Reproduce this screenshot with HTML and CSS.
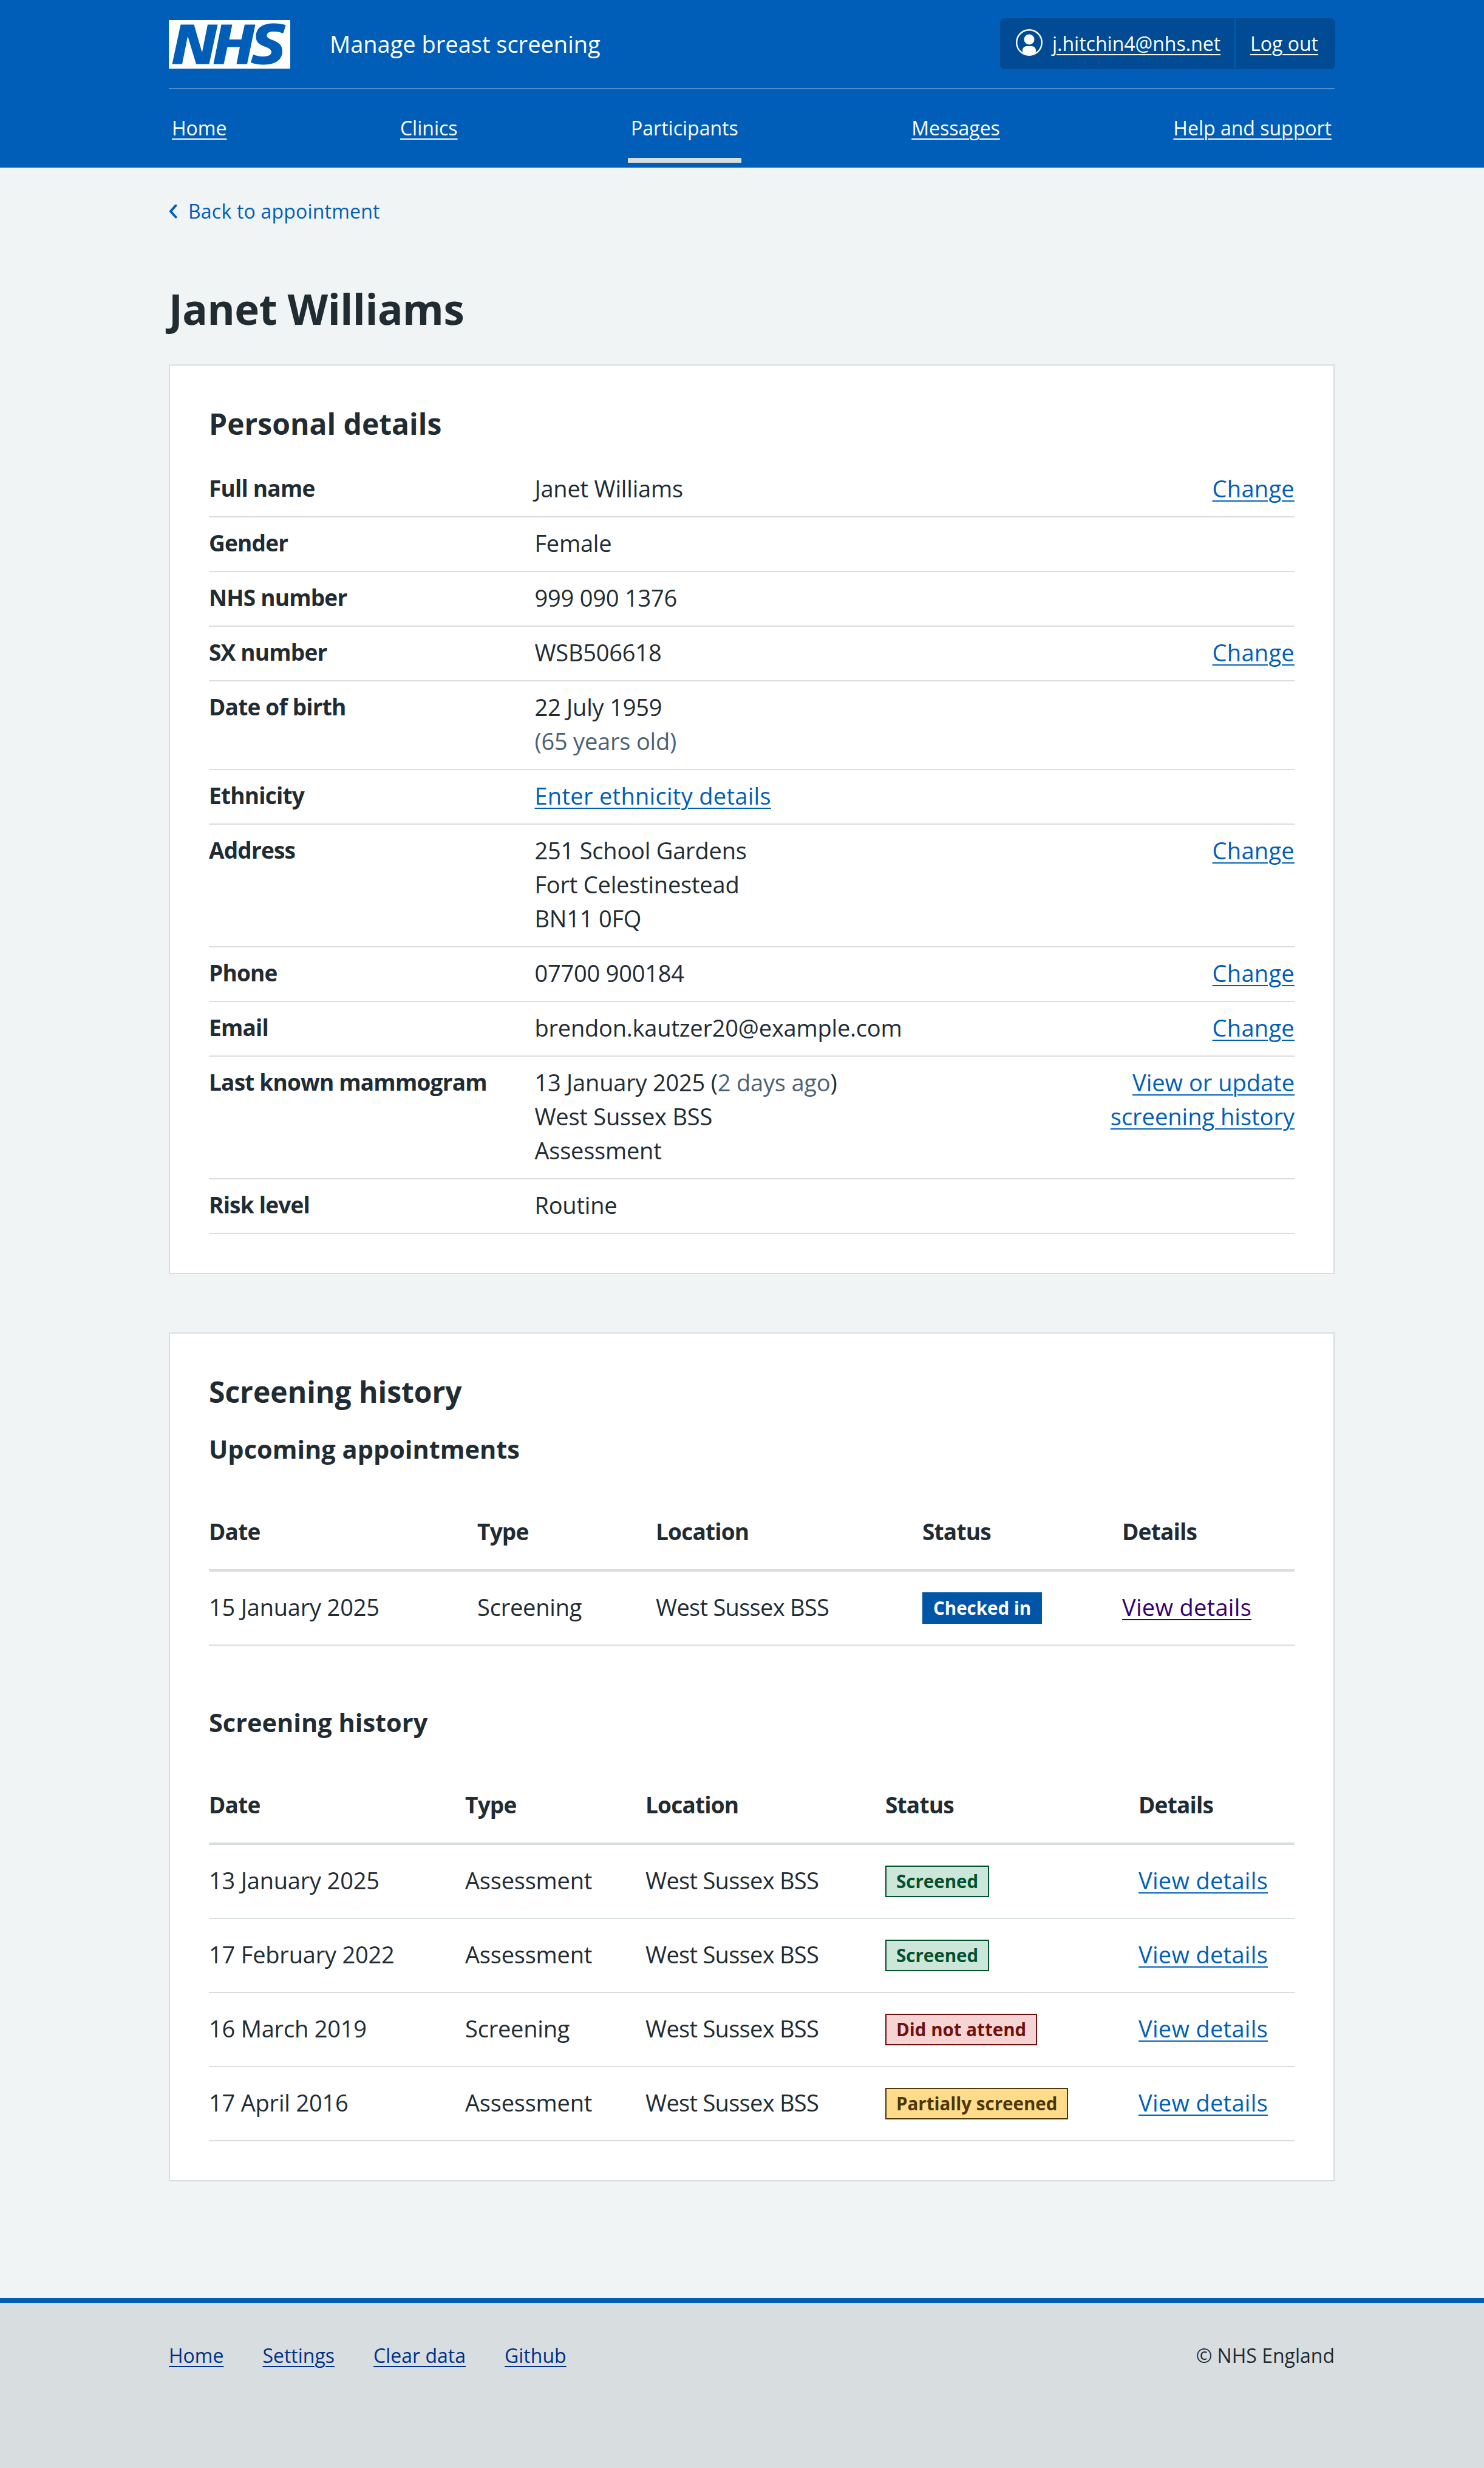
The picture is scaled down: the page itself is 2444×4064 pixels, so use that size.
FILE: index.html
```html
<!DOCTYPE html>
<html lang="en">
<head>
<meta charset="utf-8">
<title>Janet Williams – Manage breast screening</title>
<link rel="stylesheet" href="styles.css">
</head>
<body>
<header class="header">
  <div class="wrap">
    <div class="header-top">
      <div class="brand">
        <svg class="logo" viewBox="0 0 40 16" aria-label="NHS" role="img"><path fill="#fff" d="M0 0h40v16H0z"/><path fill="#005eb8" d="M3.9 1.5h4.4l2.6 9h.1l1.8-9h3.3l-2.8 13H9l-2.7-9h-.1l-1.8 9H1.1M17.3 1.5h3.6l-1 4.9h4L25 1.5h3.5l-2.7 13h-3.5l1.1-5.6h-4.1l-1.2 5.6h-3.4M37.7 4.4c-.7-.3-1.6-.6-2.9-.6-1.4 0-2.5.2-2.5 1.3 0 1.8 5.1 1.2 5.1 5.1 0 3.6-3.3 4.5-6.4 4.5-1.3 0-2.9-.3-4-.7l.8-2.7c.7.4 2.1.7 3.2.7s2.8-.2 2.8-1.5c0-2.1-5.1-1.3-5.1-5 0-3.4 2.9-4.4 5.8-4.4 1.6 0 3.1.2 4 .6"/></svg>
        <span class="service">Manage breast screening</span>
      </div>
      <div class="account">
        <div class="account-user">
          <svg class="user-icon" viewBox="0 0 44 44" aria-hidden="true"><circle cx="22" cy="22" r="20.8" fill="none" stroke="#fff" stroke-width="2.4"/><circle cx="22" cy="17" r="8.5" fill="#fff"/><path fill="#fff" d="M11 38v-3c0-4 3-7 7-7h8c4 0 7 3 7 7v3c-3 3-7 4.5-11 4.5s-8-1.5-11-4.5z"/></svg>
          <a href="#" class="header-link">j.hitchin4@nhs.net</a>
        </div>
        <div class="account-logout"><a href="#" class="header-link">Log out</a></div>
      </div>
    </div>
    <nav class="nav">
      <a href="#" class="nav-link">Home</a>
      <a href="#" class="nav-link">Clinics</a>
      <a href="#" class="nav-link nav-active">Participants</a>
      <a href="#" class="nav-link">Messages</a>
      <a href="#" class="nav-link">Help and support</a>
    </nav>
  </div>
</header>

<main class="wrap main">
  <a href="#" class="back">
    <svg class="back-icon" viewBox="0 0 14 24" aria-hidden="true"><path d="M11.5 2.5 3 12l8.5 9.5" fill="none" stroke="#005eb8" stroke-width="4" stroke-linecap="round" stroke-linejoin="round"/></svg>
    <span>Back to appointment</span>
  </a>
  <h1 class="title">Janet Williams</h1>

  <section class="card">
    <h2 class="h-m">Personal details</h2>
    <dl class="summary">
      <div class="row"><dt>Full name</dt><dd>Janet Williams</dd><dd class="act"><a href="#">Change</a></dd></div>
      <div class="row"><dt>Gender</dt><dd>Female</dd><dd class="act"></dd></div>
      <div class="row"><dt>NHS number</dt><dd>999 090 1376</dd><dd class="act"></dd></div>
      <div class="row"><dt>SX number</dt><dd>WSB506618</dd><dd class="act"><a href="#">Change</a></dd></div>
      <div class="row"><dt>Date of birth</dt><dd>22 July 1959<br><span class="muted">(65 years old)</span></dd><dd class="act"></dd></div>
      <div class="row"><dt>Ethnicity</dt><dd><a href="#">Enter ethnicity details</a></dd><dd class="act"></dd></div>
      <div class="row"><dt>Address</dt><dd>251 School Gardens<br>Fort Celestinestead<br>BN11 0FQ</dd><dd class="act"><a href="#">Change</a></dd></div>
      <div class="row"><dt>Phone</dt><dd>07700 900184</dd><dd class="act"><a href="#">Change</a></dd></div>
      <div class="row"><dt>Email</dt><dd>brendon.kautzer20@example.com</dd><dd class="act"><a href="#">Change</a></dd></div>
      <div class="row"><dt>Last known mammogram</dt><dd>13 January 2025 (<span class="muted">2 days ago</span>)<br>West Sussex BSS<br>Assessment</dd><dd class="act"><a href="#" class="act-long">View or update<br>screening history</a></dd></div>
      <div class="row"><dt>Risk level</dt><dd>Routine</dd><dd class="act"></dd></div>
    </dl>
  </section>

  <section class="card">
    <h2 class="h-m">Screening history</h2>
    <h3 class="h-s">Upcoming appointments</h3>
    <table class="table table-upcoming">
      <thead><tr><th>Date</th><th>Type</th><th>Location</th><th>Status</th><th>Details</th></tr></thead>
      <tbody>
        <tr><td>15 January 2025</td><td>Screening</td><td>West Sussex BSS</td><td><span class="tag tag-blue">Checked in</span></td><td><a href="#" class="visited">View details</a></td></tr>
      </tbody>
    </table>
    <h3 class="h-s h-gap">Screening history</h3>
    <table class="table table-history">
      <thead><tr><th>Date</th><th>Type</th><th>Location</th><th>Status</th><th>Details</th></tr></thead>
      <tbody>
        <tr><td>13 January 2025</td><td>Assessment</td><td>West Sussex BSS</td><td><span class="tag tag-green">Screened</span></td><td><a href="#">View details</a></td></tr>
        <tr><td>17 February 2022</td><td>Assessment</td><td>West Sussex BSS</td><td><span class="tag tag-green">Screened</span></td><td><a href="#">View details</a></td></tr>
        <tr><td>16 March 2019</td><td>Screening</td><td>West Sussex BSS</td><td><span class="tag tag-red">Did not attend</span></td><td><a href="#">View details</a></td></tr>
        <tr><td>17 April 2016</td><td>Assessment</td><td>West Sussex BSS</td><td><span class="tag tag-yellow">Partially screened</span></td><td><a href="#">View details</a></td></tr>
      </tbody>
    </table>
  </section>
</main>

<footer class="footer">
  <div class="wrap footer-inner">
    <ul class="footer-links">
      <li><a href="#">Home</a></li>
      <li><a href="#">Settings</a></li>
      <li><a href="#">Clear data</a></li>
      <li><a href="#">Github</a></li>
    </ul>
    <p class="copyright">© NHS England</p>
  </div>
</footer>
</body>
</html>
```

FILE: styles.css
```css
* { box-sizing: border-box; }
html, body { margin: 0; padding: 0; }
body {
  min-height: 4064px;
  display: flex;
  flex-direction: column;
  background: #f0f4f5;
  color: #212b32;
  font-family: "Open Sans", "Noto Sans", sans-serif;
  font-size: 38px;
  line-height: 56px;
  letter-spacing: -0.2px;
}
a { color: #005eb8; text-decoration-thickness: 2px; text-underline-offset: 5px; }
.row a, .table a { letter-spacing: 0.3px; }
.row .act-long { letter-spacing: 0; }
.wrap { width: 1920px; margin-left: 278px; }

.header { background: #005eb8; height: 276px; color: #fff; }
.header-top {
  height: 147px;
  padding-top: 30px;
  display: flex;
  justify-content: space-between;
  align-items: flex-start;
  border-bottom: 2px solid #4c8ecd;
}
.brand { display: flex; align-items: flex-start; padding-top: 3px; }
.logo { width: 200px; height: 80px; display: block; }
.service { margin-left: 65px; font-size: 38px; line-height: 78px; letter-spacing: 0; }
.account {
  display: flex;
  width: 552px;
  height: 84px;
  margin-right: -1px;
  background: #004b93;
  border-radius: 8px;
  font-size: 32px;
  line-height: 84px;
  letter-spacing: 0;
}
.account-user {
  width: 386px;
  display: flex;
  align-items: center;
  padding-left: 26px;
  gap: 16px;
}
.user-icon { width: 44px; height: 44px; flex: none; margin-bottom: 4px; }
.account-logout {
  flex: 1;
  margin: 2px 0;
  border-left: 2px solid #005eb8;
  padding-left: 24px;
  line-height: 80px;
}
.header-link { color: #fff; }
.nav {
  display: flex;
  justify-content: space-between;
  padding-top: 36px;
  font-size: 32px;
  line-height: 56px;
  letter-spacing: 0;
}
.nav-link {
  color: #fff;
  height: 85px;
  padding: 0 5px;
}
.nav-active { text-decoration: none; border-bottom: 8px solid #d8dde0; }

.main { flex: 1; padding-bottom: 192px; }
.back {
  display: flex;
  align-items: center;
  width: max-content;
  gap: 18px;
  margin-top: 48px;
  font-size: 32px;
  line-height: 48px;
  letter-spacing: 0.2px;
  text-decoration: none;
}
.back-icon { width: 14px; height: 24px; display: block; }
.title {
  margin: 92px 0 48px;
  font-size: 69px;
  line-height: 88px;
  font-weight: 700;
  letter-spacing: -0.5px;
}
.card {
  background: #fff;
  border: 2px solid #d8dde0;
  padding: 64px;
  margin-bottom: 96px;
}
.card:last-child { margin-bottom: 0; }
.h-m { margin: 0 0 32px; font-size: 48px; line-height: 64px; font-weight: 700; letter-spacing: 0; }
.h-s { margin: 0 0 30px; padding-top: 2px; font-size: 41.5px; line-height: 56px; font-weight: 700; letter-spacing: 0; }
.h-gap { margin-top: 96px; }

.summary { margin: 0; }
.row {
  display: grid;
  grid-template-columns: 30% 50% 20%;
  padding: 14px 0 18px;
  border-bottom: 2px solid #d8dde0;
}
.row dt { font-weight: 700; font-size: 37px; letter-spacing: -0.8px; }
.row dd { margin: 0; }
.row .act { text-align: right; }
.muted { color: #4c6272; }

.table { width: 100%; border-collapse: separate; border-spacing: 0; table-layout: fixed; }
.table th {
  text-align: left;
  font-weight: 700;
  font-size: 37px;
  letter-spacing: -0.8px;
  padding: 50px 0 34px;
  border-bottom: 4px solid #d8dde0;
}
.table td {
  padding: 30px 0 34px;
  border-bottom: 2px solid #d8dde0;
}
.table td:nth-child(3) { letter-spacing: -0.7px; }
.table-upcoming th:nth-child(1) { width: 442px; }
.table-upcoming th:nth-child(2) { width: 294px; }
.table-upcoming th:nth-child(3) { width: 439px; }
.table-upcoming th:nth-child(4) { width: 329px; }
.table-history th:nth-child(1) { width: 422px; }
.table-history th:nth-child(2) { width: 297px; }
.table-history th:nth-child(3) { width: 395px; }
.table-history th:nth-child(4) { width: 417px; }
.visited { color: #330072; }

.tag {
  display: inline-block;
  vertical-align: middle;
  margin: -11px 0 -5px;
  padding: 8px 16px;
  border: 2px solid;
  font-size: 29.5px;
  line-height: 32px;
  font-weight: 700;
  letter-spacing: 0;
}
.tag-blue { background: #0055a6; border-color: #0055a6; color: #fff; }
.tag-green { background: #cde6da; border-color: #00512e; color: #00512e; }
.tag-red { background: #f7d4d4; border-color: #6e100d; color: #6e100d; }
.tag-yellow { background: #ffdb8a; border-color: #4d3708; color: #4d3708; }

.footer {
  background: #d8dde0;
  border-top: 8px solid #005eb8;
  height: 280px;
  font-size: 32px;
  line-height: 48px;
  letter-spacing: 0;
}
.footer-inner { display: flex; justify-content: space-between; padding-top: 63px; }
.footer-links { display: flex; gap: 64px; list-style: none; margin: 0; padding: 0; }
.footer-links a { color: #003087; }
.copyright { margin: 0; }
```
